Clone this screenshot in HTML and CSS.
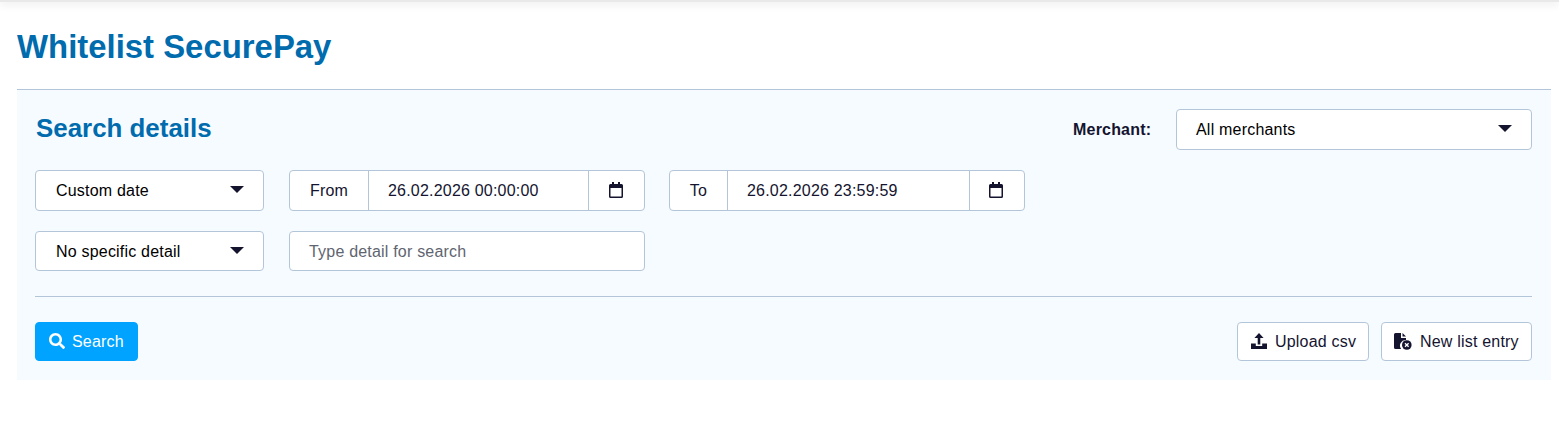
FILE: index.html
```html
<!DOCTYPE html>
<html lang="en">
<head>
    <meta charset="UTF-8">
    <meta name="viewport" content="width=device-width, initial-scale=1.0">
    <title>Whitelist SecurePay</title>
    <link rel="stylesheet" href="styles.css">
</head>
<body>
    <div class="top-bar"></div>
    <main class="page">
        <h1 class="page-title">Whitelist SecurePay</h1>
        <section class="search-panel">
            <div class="panel-head">
                <h2 class="panel-title">Search details</h2>
                <div class="merchant">
                    <span class="merchant-label">Merchant:</span>
                    <div class="select select-merchant"><span>All merchants</span><i class="caret"></i></div>
                </div>
            </div>
            <div class="form-row row-dates">
                <div class="select select-small"><span>Custom date</span><i class="caret"></i></div>
                <div class="input-group">
                    <span class="addon addon-from">From</span>
                    <span class="value value-from">26.02.2026 00:00:00</span>
                    <span class="addon addon-icon addon-icon-from">
                        <svg class="icon-cal" viewBox="0 0 14 16"><path d="M3 0h2v2h4V0h2v2h1.500A1.500 1.500 0 0 1 14 3.500v11a1.500 1.500 0 0 1-1.500 1.500h-11A1.500 1.500 0 0 1 0 14.500v-11A1.500 1.500 0 0 1 1.500 2H3zM1.500 6v8.200c0 .2.100.3.300.3h10.400c.2 0 .3-.1.300-.3V6z"/></svg>
                    </span>
                </div>
                <div class="input-group">
                    <span class="addon addon-to">To</span>
                    <span class="value value-to">26.02.2026 23:59:59</span>
                    <span class="addon addon-icon">
                        <svg class="icon-cal" viewBox="0 0 14 16"><path d="M3 0h2v2h4V0h2v2h1.500A1.500 1.500 0 0 1 14 3.500v11a1.500 1.500 0 0 1-1.500 1.500h-11A1.500 1.500 0 0 1 0 14.500v-11A1.500 1.500 0 0 1 1.500 2H3zM1.500 6v8.200c0 .2.100.3.300.3h10.400c.2 0 .3-.1.300-.3V6z"/></svg>
                    </span>
                </div>
            </div>
            <div class="form-row row-detail">
                <div class="select select-small"><span>No specific detail</span><i class="caret"></i></div>
                <div class="input-group detail-input"><span class="placeholder">Type detail for search</span></div>
            </div>
            <div class="panel-actions">
                <button class="btn btn-primary">
                    <svg class="icon-search" viewBox="0 0 512 512"><path d="M505 442.700 405.300 343c-4.500-4.500-10.600-7-17-7H372c27.600-35.300 44-79.700 44-128C416 93.100 322.900 0 208 0S0 93.100 0 208s93.100 208 208 208c48.300 0 92.700-16.400 128-44v16.300c0 6.400 2.500 12.500 7 17l99.700 99.700c9.400 9.400 24.600 9.400 33.900 0l28.300-28.300c9.400-9.400 9.400-24.600.1-34zM208 336c-70.700 0-128-57.200-128-128 0-70.700 57.200-128 128-128 70.700 0 128 57.200 128 128 0 70.700-57.200 128-128 128z"/></svg>
                    Search
                </button>
                <div class="actions-right">
                    <button class="btn btn-light btn-upload">
                        <svg class="icon-upload" viewBox="0 0 16 16"><path d="M8 0l4.600 5H9.300v6.500H6.700V5H3.400z"/><path d="M0 10.500h4.800V13h6.400v-2.500H16V16H0z"/></svg>
                        Upload csv
                    </button>
                    <button class="btn btn-light btn-new">
                        <svg class="icon-file" viewBox="0 0 18 17"><path d="M0 1.500A1.500 1.500 0 0 1 1.500 0H7v5h5v2.100A5.500 5.500 0 0 0 7.200 16H1.500A1.500 1.500 0 0 1 0 14.500z"/><path d="M8.500 0 12 3.600H8.500z"/><circle cx="12.800" cy="12" r="4.800"/><path class="x" d="M11 10.200l3.600 3.600m0-3.600-3.600 3.600"/></svg>
                        New list entry
                    </button>
                </div>
            </div>
        </section>
    </main>
</body>
</html>
```

FILE: styles.css
```css
* {
    box-sizing: border-box;
}
body {
    margin: 0;
    font-family: "Liberation Sans", Arial, sans-serif;
    font-size: 16px;
    letter-spacing: 0.2px;
    color: #14142f;
    background: #fff;
}
.top-bar {
    height: 2px;
    background: #e9e9e9;
    box-shadow: 0 1px 8px rgba(0, 0, 0, 0.22);
}
.page {
    padding: 0 8px 0 17px;
}
.page-title {
    margin: 0;
    padding-top: 25px;
    height: 87px;
    font-size: 32.9px;
    line-height: 39px;
    font-weight: 700;
    letter-spacing: 0;
    color: #006bad;
}
.search-panel {
    height: 291px;
    padding: 19px 19px 0 18px;
    border-top: 1px solid #b3c6d9;
    background: #f6fbff;
}
.panel-head {
    display: flex;
    justify-content: space-between;
    align-items: flex-start;
    height: 41px;
}
.panel-title {
    margin: 0 0 0 1px;
    font-size: 25.9px;
    line-height: 38px;
    font-weight: 700;
    letter-spacing: 0;
    color: #006bad;
}
.merchant {
    display: flex;
    align-items: center;
}
.merchant-label {
    width: 103px;
    font-weight: 700;
}
.select {
    display: flex;
    justify-content: space-between;
    align-items: center;
    padding: 0 19px;
    border: 1px solid #b3c6d9;
    border-radius: 4px;
    background: #fff;
    color: #000;
}
.select-merchant {
    width: 356px;
    height: 41px;
}
.select-small {
    width: 229px;
    height: 100%;
    padding-left: 20px;
}
.caret {
    width: 0;
    height: 0;
    border-left: 7px solid transparent;
    border-right: 7px solid transparent;
    border-top: 7px solid #14142f;
    margin-top: -2px;
}
.form-row {
    display: flex;
    gap: 25px;
}
.row-dates {
    height: 41px;
    margin-top: 20px;
}
.row-detail {
    height: 40px;
    margin-top: 20px;
}
.row-detail .select span,
.row-detail .placeholder {
    margin-top: 2px;
}
.input-group {
    display: flex;
    width: 356px;
    border: 1px solid #b3c6d9;
    border-radius: 4px;
    background: #fff;
}
.row-dates .input-group + .input-group {
    margin-left: -1px;
}
.addon {
    display: flex;
    justify-content: center;
    align-items: center;
}
.addon-from {
    width: 79px;
    border-right: 1px solid #b3c6d9;
}
.addon-to {
    width: 58px;
    border-right: 1px solid #b3c6d9;
}
.addon-icon {
    width: 55px;
    padding-right: 2px;
    border-left: 1px solid #b3c6d9;
}
.addon-icon-from {
    width: 56px;
    padding-right: 1px;
}
.value {
    display: flex;
    align-items: center;
    flex: 1;
    padding-left: 19px;
}
.icon-cal {
    width: 14px;
    height: 16px;
    margin-bottom: 1px;
    fill: #14142f;
}
.detail-input {
    align-items: center;
    padding-left: 19px;
}
.placeholder {
    color: #5f6570;
}
.panel-actions {
    display: flex;
    justify-content: space-between;
    margin-top: 25px;
    padding-top: 25px;
    border-top: 1px solid #b3c6d9;
}
.actions-right {
    display: flex;
    gap: 12px;
}
.btn {
    display: flex;
    align-items: center;
    height: 39px;
    padding: 0 13px;
    border-radius: 4px;
    font-family: inherit;
    font-size: 16px;
    letter-spacing: 0.2px;
}
.btn-primary {
    width: 103px;
    border: 1px solid #00a3ff;
    background: #00a3ff;
    color: #fff;
}
.btn-light {
    border: 1px solid #b3c6d9;
    background: #fff;
    color: #14142f;
}
.btn-upload {
    width: 132px;
    padding-right: 0;
}
.btn-new {
    width: 151px;
    padding: 0 0 0 12px;
}
.icon-search {
    width: 16px;
    height: 16px;
    margin: 0 7px 1px 0;
    fill: #fff;
}
.icon-upload {
    width: 16px;
    height: 16px;
    margin: 0 8px 1px 0;
    fill: #14142f;
}
.icon-file {
    width: 18px;
    height: 17px;
    margin-right: 8px;
    fill: #14142f;
}
.icon-file .x {
    fill: none;
    stroke: #fff;
    stroke-width: 1.300;
}
```
